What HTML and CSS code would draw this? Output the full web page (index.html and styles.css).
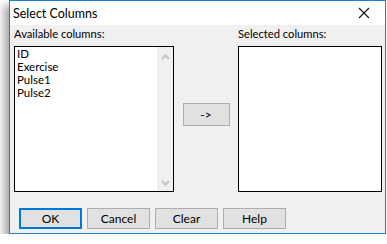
FILE: index.html
```html
<!DOCTYPE html>
<html lang="en">
<head>
    <meta charset="UTF-8">
    <title>Select Columns</title>
    <link rel="stylesheet" href="styles.css">
</head>
<body>
<div class="dialog">
    <div class="titlebar">
        <span class="title">Select Columns</span>
        <svg class="close" width="12" height="12" viewBox="0 0 12 12">
            <path d="M1 1 L11 11 M11 1 L1 11" stroke="#111" stroke-width="1.1" fill="none"/>
        </svg>
    </div>

    <div class="content">
        <div class="columns">
            <!-- Available -->
            <div class="col col-left">
                <label class="caption">Available columns:</label>
                <div class="listbox">
                    <ul class="items">
                        <li>ID</li>
                        <li>Exercise</li>
                        <li>Pulse1</li>
                        <li>Pulse2</li>
                    </ul>
                    <div class="scrollbar">
                        <svg width="9" height="6" viewBox="0 0 9 6"><path d="M1 5 L4.5 1.5 L8 5" stroke="#c2c2c2" stroke-width="2" fill="none"/></svg>
                        <svg width="9" height="6" viewBox="0 0 9 6"><path d="M1 1 L4.5 4.5 L8 1" stroke="#c2c2c2" stroke-width="2" fill="none"/></svg>
                    </div>
                </div>
            </div>

            <div class="middle">
                <button class="btn btn-move">-&gt;</button>
            </div>

            <!-- Selected -->
            <div class="col col-right">
                <label class="caption">Selected columns:</label>
                <div class="listbox"></div>
            </div>
        </div>

        <div class="buttons">
            <button class="btn btn-ok">OK</button>
            <button class="btn">Cancel</button>
            <button class="btn">Clear</button>
            <button class="btn">Help</button>
        </div>
    </div>
</div>
</body>
</html>
```

FILE: styles.css
```css
/* General */
body {
    margin: 0;
    background: #ffffff;
    font-family: Lato, "Liberation Sans", sans-serif;
    font-size: 12px;
    color: #000;
}

/* Window */
.dialog {
    margin-left: 9px;
    width: 375px;
    height: 232px;
    border: 1px solid #1a82d6;
    background: #f0f0f0;
    display: flex;
    flex-direction: column;
    box-shadow: -5px 5px 8px rgba(0, 0, 0, 0.35);
}

.titlebar {
    height: 24px;
    background: #fff;
    display: flex;
    align-items: center;
    justify-content: space-between;
    padding: 0 15px 0 3px;
}

.title {
    font-size: 12.5px;
    margin-top: 1px;
}

.close {
    display: block;
}

/* Content */
.content {
    flex: 1;
    padding: 1px 3px 0 4px;
    display: flex;
    flex-direction: column;
}

.columns {
    display: flex;
}

.col {
    display: flex;
    flex-direction: column;
}

.col-left {
    width: 160px;
}

.col-right {
    width: 144px;
}

.caption {
    height: 15px;
    line-height: 15px;
    margin-bottom: 5px;
    font-size: 11.2px;
}

.listbox {
    height: 144px;
    border: 1px solid #000;
    background: #fff;
    display: flex;
}

.items {
    list-style: none;
    margin: 0;
    padding: 0 0 0 2px;
    flex: 1;
    line-height: 13px;
    font-size: 11.5px;
}

.scrollbar {
    width: 16px;
    background: #f0f0f0;
    display: flex;
    flex-direction: column;
    justify-content: space-between;
    align-items: center;
    padding: 7px 0 5px;
}

.middle {
    width: 64px;
    display: flex;
    justify-content: center;
    padding-top: 77px;
    box-sizing: border-box;
}

/* Buttons */
.btn {
    font-family: inherit;
    font-size: 12px;
    color: #000;
    background: #e1e1e1;
    border: 1px solid #adadad;
    width: 63px;
    height: 21px;
    padding: 0;
    margin: 0;
}

.btn-move {
    width: 47px;
    height: 23px;
}

.btn-ok {
    border: 2px solid #0078d7;
}

.buttons {
    display: flex;
    gap: 5px;
    margin-top: 16px;
    padding-left: 5px;
}
```
